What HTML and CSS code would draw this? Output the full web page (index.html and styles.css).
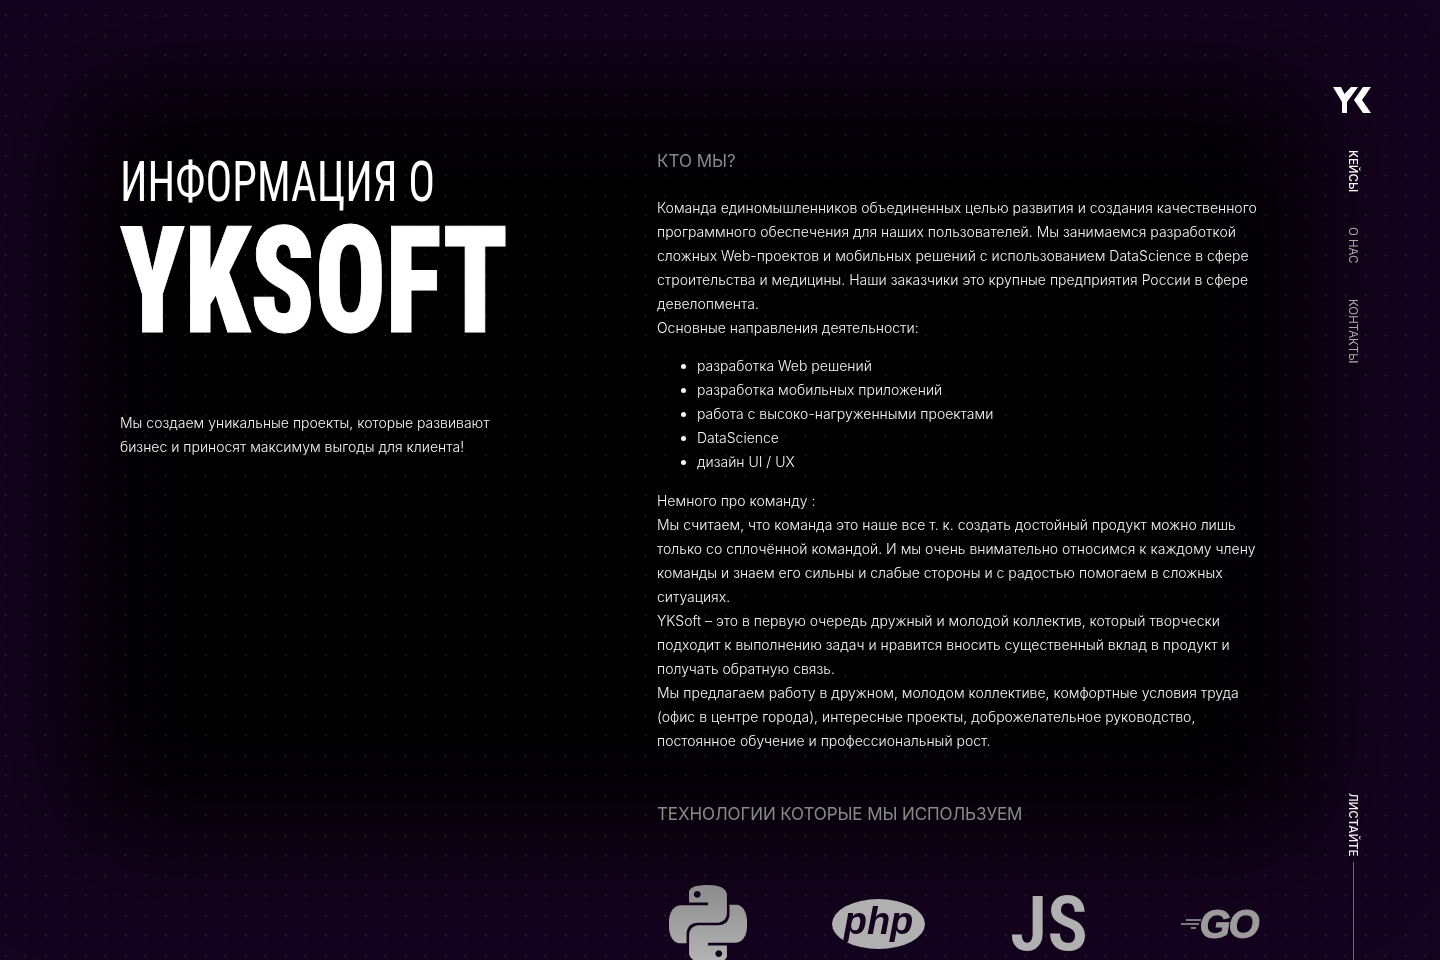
FILE: index.html
```html
<!DOCTYPE html>
<html lang="ru">
<head>
    <meta charset="UTF-8">
    <meta name="viewport" content="width=device-width, initial-scale=1.0">
    <title>YKSoft</title>
    <link rel="stylesheet" href="styles.css">
</head>
<body>
    <div class="page">
        <div class="glow"></div>
        <div class="dots"></div>
        <div class="content">
            <section class="intro">
                <h1 class="intro-title">
                    <span class="title-small">ИНФОРМАЦИЯ О</span>
                    <span class="title-big">YKSOFT</span>
                </h1>
                <p class="intro-text">Мы создаем уникальные проекты, которые развивают бизнес и приносят максимум выгоды для клиента!</p>
            </section>
            <section class="about">
                <h3 class="about-head">КТО МЫ?</h3>
                <div class="about-body">
                    <p>Команда единомышленников объединенных целью развития и создания качественного программного обеспечения для наших пользователей. Мы занимаемся разработкой сложных Web-проектов и мобильных решений с использованием DataScience в сфере строительства и медицины. Наши заказчики это крупные предприятия России в сфере девелопмента.<br>Основные направления деятельности:</p>
                    <ul>
                        <li>разработка Web решений</li>
                        <li>разработка мобильных приложений</li>
                        <li>работа с высоко-нагруженными проектами</li>
                        <li>DataScience</li>
                        <li>дизайн UI / UX</li>
                    </ul>
                    <p>Немного про команду :<br>Мы считаем, что команда это наше все т. к. создать достойный продукт можно лишь только со сплочённой командой. И мы очень внимательно относимся к каждому члену команды и знаем его сильны и слабые стороны и с радостью помогаем в сложных ситуациях.<br>YKSoft – это в первую очередь дружный и молодой коллектив, который творчески подходит к выполнению задач и нравится вносить существенный вклад в продукт и получать обратную связь.<br>Мы предлагаем работу в дружном, молодом коллективе, комфортные условия труда (офис в центре города), интересные проекты, доброжелательное руководство, постоянное обучение и профессиональный рост.</p>
                </div>
                <h3 class="tech-head">ТЕХНОЛОГИИ КОТОРЫЕ МЫ ИСПОЛЬЗУЕМ</h3>
                <div class="tech-list">
                    <div class="tech tech-python">
                        <svg viewBox="0 0 24 24" width="78" height="78"><defs><linearGradient id="py" x1="0" y1="0" x2="0" y2="1"><stop offset="0" stop-color="#8c8c8c"/><stop offset="1" stop-color="#b4b4b4"/></linearGradient></defs><path fill="url(#py)" d="M14.25.18l.9.2.73.26.59.3.45.32.34.34.25.34.16.33.1.3.04.26.02.2-.01.13V8.5l-.05.63-.13.55-.21.46-.26.38-.3.31-.33.25-.35.19-.35.14-.33.1-.3.07-.26.04-.21.02H8.77l-.69.05-.59.14-.5.22-.41.27-.33.32-.27.35-.2.36-.15.37-.1.35-.07.32-.04.27-.02.21v3.06H3.17l-.21-.03-.28-.07-.32-.12-.35-.18-.36-.26-.36-.36-.35-.46-.32-.59-.28-.73-.21-.88-.14-1.05-.05-1.23.06-1.22.16-1.04.24-.87.32-.71.36-.57.4-.44.42-.33.42-.24.4-.16.36-.1.32-.05.24-.01h.16l.06.01h8.16v-.83H6.18l-.01-2.75-.02-.37.05-.34.11-.31.17-.28.25-.26.31-.23.38-.2.44-.18.51-.15.58-.12.64-.1.71-.06.77-.04.84-.02 1.27.05zm-6.3 1.98l-.23.33-.08.41.08.41.23.34.33.22.41.09.41-.09.33-.22.23-.34.08-.41-.08-.41-.23-.33-.33-.22-.41-.09-.41.09zm13.09 3.95l.28.06.32.12.35.18.36.27.36.35.35.47.32.59.28.73.21.88.14 1.04.05 1.23-.06 1.23-.16 1.04-.24.86-.32.71-.36.57-.4.45-.42.33-.42.24-.4.16-.36.09-.32.05-.24.02-.16-.01h-8.22v.82h5.84l.01 2.76.02.36-.05.34-.11.31-.17.29-.25.25-.31.24-.38.2-.44.17-.51.15-.58.13-.64.09-.71.07-.77.04-.84.01-1.27-.04-1.07-.14-.9-.2-.73-.25-.59-.3-.45-.33-.34-.34-.25-.34-.16-.33-.1-.3-.04-.25-.02-.2.01-.13v-5.34l.05-.64.13-.54.21-.46.26-.38.3-.32.33-.24.35-.2.35-.14.33-.1.3-.06.26-.04.21-.02.13-.01h5.84l.69-.05.59-.14.5-.21.41-.28.33-.32.27-.35.2-.36.15-.36.1-.35.07-.32.04-.28.02-.21V6.07h2.09l.14.01zm-6.47 14.25l-.23.33-.08.41.08.41.23.33.33.23.41.08.41-.08.33-.23.23-.33.08-.41-.08-.41-.23-.33-.33-.23-.41-.08-.41.08z"/></svg>
                    </div>
                    <div class="tech tech-php"><span>php</span></div>
                    <div class="tech tech-js"><span>JS</span></div>
                    <div class="tech tech-go">
                        <svg class="go-lines" viewBox="0 0 21 10" width="21" height="10"><path d="M5 1h15M0 5h18M10 9h5" stroke="#a0a0a0" stroke-width="1.4" fill="none"/></svg>
                        <span>GO</span>
                    </div>
                </div>
            </section>
            <nav class="side">
                <svg class="logo" viewBox="0 0 38 26" width="38" height="26"><path fill="#fff" d="M0 0h8l3.500 7L18 0h7L14 15v11H9V15zM30 0h8l-9 13 9 13h-8l-9-13z"/></svg>
                <a class="side-link active">КЕЙСЫ</a>
                <a class="side-link">О НАС</a>
                <a class="side-link">КОНТАКТЫ</a>
                <div class="scroll-hint">
                    <span class="scroll-text">ЛИСТАЙТЕ</span>
                    <span class="scroll-line"></span>
                </div>
            </nav>
        </div>
    </div>
</body>
</html>
```

FILE: styles.css
```css
* {
    box-sizing: border-box;
}
html, body {
    margin: 0;
    height: 100%;
}
body {
    font-family: Inter, "Noto Sans", sans-serif;
    font-weight: 300;
    background-color: #14031e;
    color: #f6f6f6;
    overflow: hidden;
}
.page {
    position: relative;
    height: 960px;
    overflow: hidden;
    background: #14031e;
}
.glow {
    position: absolute;
    left: 80px;
    top: 90px;
    width: 1230px;
    height: 740px;
    background: black;
    filter: blur(60px);
}
.dots {
    position: absolute;
    inset: 0;
    background-image: radial-gradient(circle at 5.5px 15.5px, rgba(255, 255, 255, 0.12) 0, rgba(255, 255, 255, 0.06) 1px, transparent 1.5px);
    background-size: 20px 20px;
}
.content {
    position: relative;
    display: flex;
    height: 960px;
    padding-left: 120px;
    will-change: transform;
}
.intro {
    width: 537px;
    padding-top: 152px;
}
.intro-title {
    margin: 0;
    font-family: Roboto, "Liberation Sans", sans-serif;
    font-weight: 400;
    font-stretch: 75%;
    color: white;
}
.title-small {
    display: block;
    font-size: 56px;
    line-height: 60px;
    transform: scaleX(0.796);
    transform-origin: left;
}
.title-big {
    display: block;
    margin-top: 5px;
    font-size: 148px;
    line-height: 130px;
    font-weight: 900;
    -webkit-text-stroke: 1px white;
    transform: scaleX(0.793);
    transform-origin: left;
}
.intro-text {
    margin: 64px 0 0;
    width: 400px;
    font-size: 14px;
    line-height: 24px;
}
.about {
    width: 610px;
    padding-top: 150px;
}
.about-head {
    margin: 0;
    font-size: 17px;
    line-height: 22px;
    font-weight: 400;
    color: #8a8a8a;
}
.about-body {
    margin-top: 24px;
    font-size: 14px;
    line-height: 24px;
}
.about-body p {
    margin: 0;
}
.about-body ul {
    margin: 14px 0 15px;
    padding-left: 40px;
}
.tech-head {
    margin: 49px 0 0;
    font-size: 17px;
    line-height: 24px;
    font-weight: 400;
    letter-spacing: -0.1px;
    color: #8a8a8a;
}
.tech-list {
    display: grid;
    grid-template-columns: repeat(4, 170.5px);
    justify-items: center;
    align-items: center;
    margin: 59px 0 0 -34.25px;
    color: #b0b0b0;
}
.tech {
    display: flex;
    align-items: center;
    height: 78px;
}
.tech-php span {
    display: block;
    width: 93px;
    height: 50px;
    border-radius: 50%;
    background: #b0b0b0;
    color: #14021f;
    font-family: "Liberation Sans", sans-serif;
    font-size: 38px;
    font-weight: 700;
    font-style: italic;
    line-height: 44px;
    text-align: center;
}
.tech-js span {
    font-family: Roboto, sans-serif;
    font-weight: 600;
    font-stretch: 85%;
    font-size: 76px;
    line-height: 60px;
}
.tech-go span {
    margin-left: -3px;
    font-family: "Liberation Sans", sans-serif;
    font-weight: 700;
    font-style: italic;
    font-size: 40px;
    letter-spacing: -2px;
    color: #9c9c9c;
    -webkit-text-stroke: 1px #9c9c9c;
}
.side {
    position: absolute;
    left: 1333px;
    top: 87px;
    width: 38px;
    display: flex;
    flex-direction: column;
    align-items: center;
    height: 873px;
}
.logo {
    margin-bottom: 37px;
}
.side-link {
    writing-mode: vertical-rl;
    font-size: 11.5px;
    font-weight: 400;
    line-height: 14px;
    color: #ababab;
    margin-bottom: 35px;
    position: relative;
    left: 1px;
}
.side-link.active {
    color: white;
    font-weight: 500;
}
.scroll-hint {
    margin-top: auto;
    display: flex;
    flex-direction: column;
    align-items: center;
    gap: 5px;
    position: relative;
    left: 1px;
}
.scroll-text {
    writing-mode: vertical-rl;
    font-size: 11.5px;
    font-weight: 500;
    line-height: 14px;
    color: #f0f0f0;
}
.scroll-line {
    width: 1px;
    height: 98px;
    background: #6e6a72;
}
```
